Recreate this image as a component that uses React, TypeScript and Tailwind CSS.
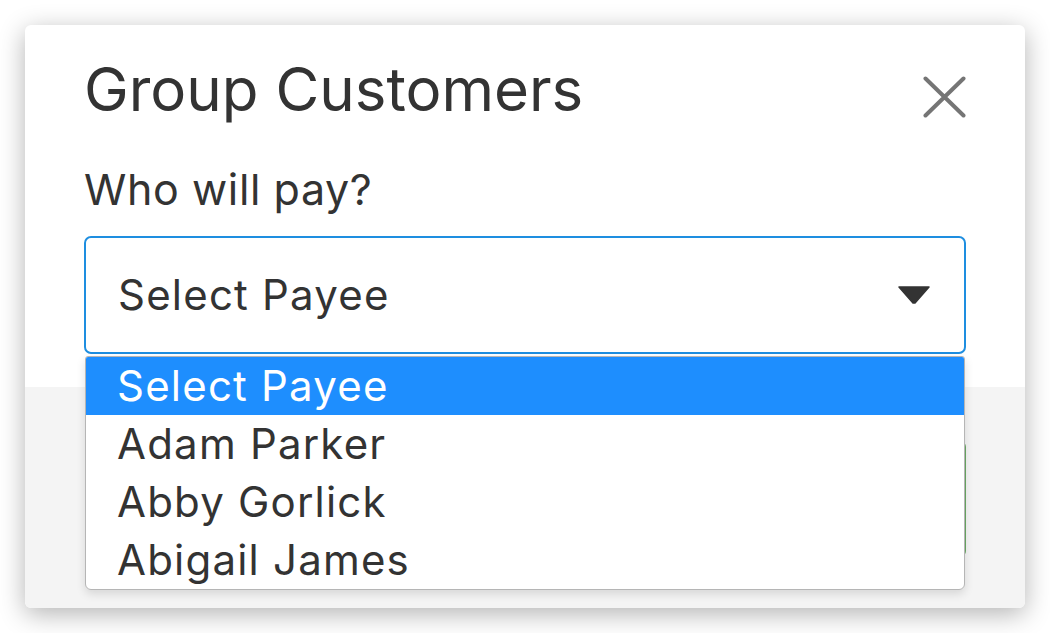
import React from "react";

export default function App() {
  const items = ["Select Payee", "Adam Parker", "Abby Gorlick", "Abigail James"];
  return (
    <div
      className="w-[1050px] h-[633px] bg-white p-[25px] text-[#333333]"
      style={{ fontFamily: "Inter, Lato, sans-serif" }}
    >
      <div className="relative flex h-full flex-col rounded-[6px] bg-white shadow-[0_6px_26px_rgba(0,0,0,0.3)]">
        <div className="px-[59px] pt-[28px]">
          <div className="flex h-[72px] items-start justify-between">
            <h1 className="text-[60px] leading-[72px] font-normal">Group Customers</h1>
            <button className="mt-[23px] text-[#757575]" aria-label="Close">
              <svg width="43" height="42" viewBox="0 0 43 42" fill="none" stroke="currentColor" strokeWidth="4" strokeLinecap="round">
                <path d="M2.5 2.5 L40.5 39.5 M40.5 2.5 L2.5 39.5" />
              </svg>
            </button>
          </div>
          <div className="mt-[38px] text-[43px] leading-[52px] tracking-[0.6px]">Who will pay?</div>
          <div className="relative mt-[21px]">
            <div className="flex h-[118px] items-center justify-between rounded-[7px] border-2 border-[#1e8ee0] bg-white pl-[32px] pr-[34px]">
              <span className="text-[42px] leading-[52px] tracking-[1.2px]">Select Payee</span>
              <svg width="32" height="18" viewBox="0 0 32 18">
                <path d="M1 1 L31 1 L17 17 L15 17 Z" fill="#333333" stroke="#333333" strokeWidth="1.5" strokeLinejoin="round" />
              </svg>
            </div>
            <div className="absolute left-[1px] right-[1px] top-[120px] z-10 overflow-hidden rounded-b-[6px] rounded-t-[3px] border border-[#b5b5b5] bg-white shadow-[0_4px_10px_rgba(0,0,0,0.12)]">
              {items.map((it, i) => (
                <div
                  key={it}
                  className={
                    "h-[58px] pl-[31px] text-[42px] leading-[58px] tracking-[1.2px] " +
                    (i === 0 ? "bg-[#1e8efe] text-white" : "text-[#333333]")
                  }
                >
                  {it}
                </div>
              ))}
            </div>
          </div>
        </div>
        <div className="mt-[33px] flex flex-1 justify-end rounded-b-[6px] bg-[#f4f4f4] pr-[59px] pt-[54px]">
          <div className="h-[116px] w-[220px] rounded-[6px] bg-[#6aaa64]"></div>
        </div>
      </div>
    </div>
  );
}
